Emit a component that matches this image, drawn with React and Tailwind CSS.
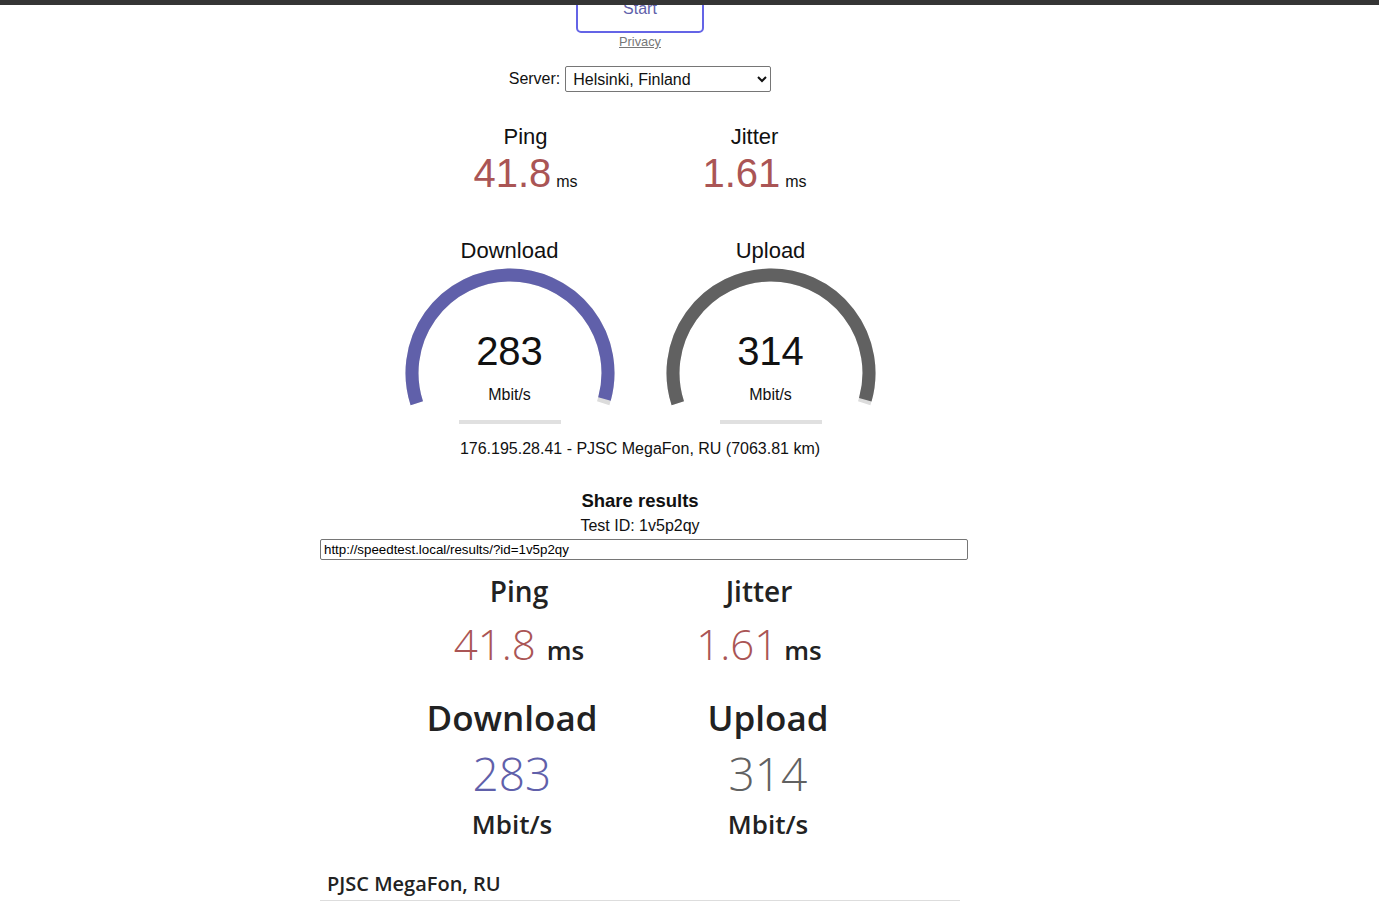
import React from 'react';

const arial = { fontFamily: '"Liberation Sans", Arial, sans-serif' };

// canvas-style arc: angles in degrees, clockwise, y pointing down
const arcPath = (cx, cy, r, a0, a1) => {
  const rad = (a) => (a * Math.PI) / 180;
  const x0 = cx + r * Math.cos(rad(a0));
  const y0 = cy + r * Math.sin(rad(a0));
  const x1 = cx + r * Math.cos(rad(a1));
  const y1 = cy + r * Math.sin(rad(a1));
  const large = a1 - a0 > 180 ? 1 : 0;
  return `M ${x0} ${y0} A ${r} ${r} 0 ${large} 1 ${x1} ${y1}`;
};

const Gauge = ({ title, value, amount, color }) => {
  const start = 162;
  const end = 378;
  const fgEnd = start + (end - start) * amount;
  return (
    <div className="w-[256px] flex flex-col items-center">
      <div className="text-[22px] leading-[22px] text-[#111]">{title}</div>
      <div className="relative w-[256px] h-[165px]">
        <svg width="256" height="165" viewBox="0 0 256 165" className="block">
          <path d={arcPath(128, 111, 98, start, end)} fill="none" stroke="#dcdcdc" strokeWidth="13" />
          <path d={arcPath(128, 111, 98, start, fgEnd)} fill="none" stroke={color} strokeWidth="13" />
          <rect x="77" y="158" width="102" height="4" fill="#e0e0e0" />
        </svg>
        <div className="absolute left-0 right-0 top-[69px] text-center text-[40px] leading-[40px] text-[#111]">{value}</div>
        <div className="absolute left-0 right-0 top-[124px] text-center text-[16px] leading-[18px] text-[#111]">Mbit/s</div>
      </div>
    </div>
  );
};

const SmallMeter = ({ title, value }) => (
  <div className="w-[224px] flex flex-col items-center">
    <div className="text-[22px] leading-[22px] text-[#111]">{title}</div>
    <div className="mt-[5px] h-[40px] leading-[40px] whitespace-nowrap">
      <span className="text-[40px] text-[#aa5555]">{value}</span>
      <span className="text-[16px] text-[#111] ml-[5px]">ms</span>
    </div>
  </div>
);

const ResultCol = ({ title, value, unit, color, width, unitGap }) => (
  <div className={`${width} flex flex-col items-center`}>
    <div className="text-[28px] leading-[28px] font-semibold text-[#222]">{title}</div>
    <div className="mt-[18px] h-[42px] leading-[42px] whitespace-nowrap">
      <span className="text-[42px] font-light" style={{ color }}>{value}</span>
      <span className={`text-[26px] font-semibold text-[#222] ${unitGap}`}>{unit}</span>
    </div>
  </div>
);

const SpeedCol = ({ title, value, color }) => (
  <div className="w-[256px] flex flex-col items-center">
    <div className="text-[35px] leading-[35px] font-semibold text-[#222]">{title}</div>
    <div className="mt-[15px] text-[46px] leading-[46px] font-light" style={{ color }}>{value}</div>
    <div className="mt-[15px] text-[26px] leading-[26px] font-semibold text-[#222]">Mbit/s</div>
  </div>
);

export default function App() {
  return (
    <div className="min-h-[901px] bg-white" style={arial}>
      {/* window edge */}
      <div className="h-[5px] bg-[#353535]" />

      <div className="w-[1280px] h-[896px] overflow-hidden flex flex-col items-center">
        <button className="-mt-[10px] w-[128px] h-[38px] border-2 border-[#6464e6] rounded-[5px] text-[16px] leading-[24px] text-[#6060AA] flex justify-center">
          Start
        </button>
        <a className="mt-px text-[12.8px] leading-[15px] text-[#777] underline">Privacy</a>

        {/* server picker */}
        <div className="mt-[17px] flex items-center gap-[5px] text-[16px] text-[#111]">
          <span>Server:</span>
          <select
            defaultValue="hel"
            className="w-[206px] h-[26px] border border-[#767676] rounded-[2px] bg-white pl-[3px] text-[16px] text-[#111]"
            style={arial}
          >
            <option value="hel">Helsinki, Finland</option>
          </select>
        </div>

        <div className="mt-[34px] flex gap-[5px]">
          <SmallMeter title="Ping" value="41.8" />
          <SmallMeter title="Jitter" value="1.61" />
        </div>

        <div className="mt-[47px] flex gap-[5px]">
          <Gauge title="Download" value="283" amount={0.988} color="#6060AA" />
          <Gauge title="Upload" value="314" amount={0.99} color="#616161" />
        </div>

        <div className="mt-[13px] text-[16px] leading-[18px] text-[#111]">
          176.195.28.41 - PJSC MegaFon, RU (7063.81 km)
        </div>

        {/* share */}
        <div className="mt-[32px] text-[18.5px] leading-[21px] font-bold text-[#111]">Share results</div>
        <div className="mt-[6px] text-[16px] leading-[18px] text-[#111]">Test ID: 1v5p2qy</div>
        <div className="mt-[2px] w-[640px]">
          <input
            readOnly
            value="http://speedtest.local/results/?id=1v5p2qy"
            className="w-[648px] h-[21px] border border-[#767676] rounded-[2px] px-[3px] text-[13.33px] text-black outline-none"
            style={arial}
          />
        </div>

        {/* results image */}
        <div className="w-[640px] flex flex-col" style={{ fontFamily: '"Open Sans", sans-serif' }}>
          <div className="mt-[16px] ml-[79px] flex">
            <ResultCol title="Ping" value="41.8" unit="ms" color="#aa5555" width="w-[240px]" unitGap="ml-[11px]" />
            <ResultCol title="Jitter" value="1.61" unit="ms" color="#aa5555" width="w-[240px]" unitGap="ml-[6px]" />
          </div>
          <div className="mt-[35px] ml-[64px] flex">
            <SpeedCol title="Download" value="283" color="#6060AA" />
            <SpeedCol title="Upload" value="314" color="#616161" />
          </div>
          <div className="mt-[37px] pl-[7px] pb-[6px] border-b border-[#dddddd] text-[20px] leading-[20px] font-semibold text-[#222]">
            PJSC MegaFon, RU
          </div>
        </div>
      </div>
    </div>
  );
}
